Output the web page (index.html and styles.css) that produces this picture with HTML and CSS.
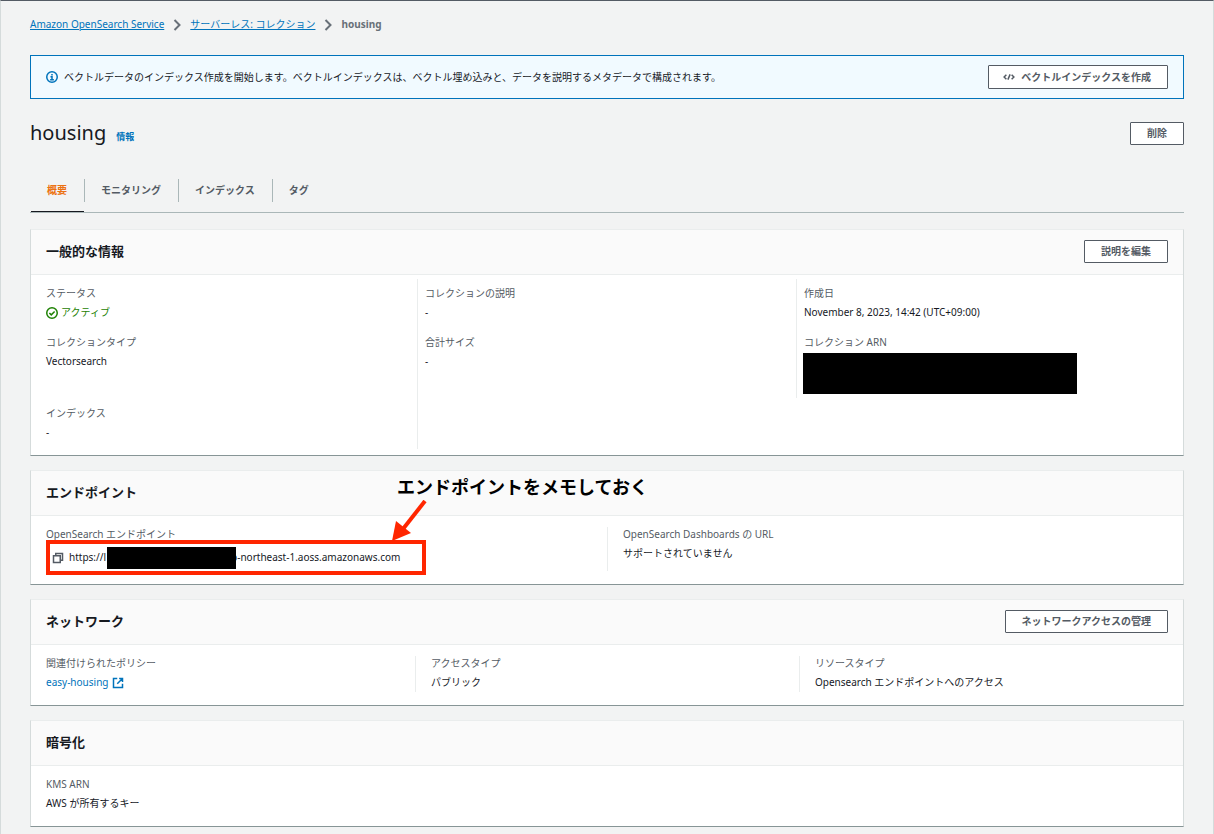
FILE: index.html
```html
<!DOCTYPE html>
<html lang="ja">
<head>
<meta charset="utf-8">
<title>housing</title>
<link rel="stylesheet" href="styles.css">
</head>
<body>
<main class="page">
  <nav class="breadcrumb" aria-label="breadcrumb">
    <a href="#">Amazon OpenSearch Service</a>
    <svg class="chevron" viewBox="0 0 8 12"><path d="M1.5 1 6.5 6 1.5 11"/></svg>
    <a href="#">サーバーレス: コレクション</a>
    <svg class="chevron" viewBox="0 0 8 12"><path d="M1.5 1 6.5 6 1.5 11"/></svg>
    <span class="current">housing</span>
  </nav>

  <section class="banner">
    <svg class="icon" viewBox="0 0 16 16"><circle cx="8" cy="8" r="7"/><path d="M8 4v2M6 7.5h2V11M5.500 11.500h5"/></svg>
    <p class="banner-text">ベクトルデータのインデックス作成を開始します。ベクトルインデックスは、ベクトル埋め込みと、データを説明するメタデータで構成されます。</p>
    <button class="button" type="button"><svg class="icon code" viewBox="0 0 16 16"><path d="M4.500 5 1.500 8l3 3M11.500 5l3 3-3 3M9.500 4.500 6.500 11.500"/></svg>ベクトルインデックスを作成</button>
  </section>

  <header class="title-row">
    <h1>housing</h1>
    <a class="info" href="#">情報</a>
    <button class="button push" type="button">削除</button>
  </header>

  <div class="tabs" role="tablist">
    <button class="tab active" role="tab" aria-selected="true" type="button">概要</button>
    <button class="tab" role="tab" type="button">モニタリング</button>
    <button class="tab" role="tab" type="button">インデックス</button>
    <button class="tab" role="tab" type="button">タグ</button>
  </div>

  <div class="panels">
    <section class="panel">
      <div class="panel-head"><h2>一般的な情報</h2><button class="button" type="button">説明を編集</button></div>
      <div class="general">
        <dl class="stack">
          <div><dt>ステータス</dt><dd class="ok"><svg class="icon" viewBox="0 0 16 16"><circle cx="8" cy="8" r="7"/><path d="m4.500 8 2.500 2.500 4.500-4.500"/></svg>アクティブ</dd></div>
          <div class="tall"><dt>コレクションタイプ</dt><dd>Vectorsearch</dd></div>
          <div><dt>インデックス</dt><dd>-</dd></div>
        </dl>
        <dl class="stack">
          <div><dt>コレクションの説明</dt><dd>-</dd></div>
          <div><dt>合計サイズ</dt><dd>-</dd></div>
        </dl>
        <dl class="stack short">
          <div><dt>作成日</dt><dd>November 8, 2023, 14:42 (UTC+09:00)</dd></div>
          <div><dt>コレクション ARN</dt><dd class="arn"></dd></div>
        </dl>
      </div>
    </section>

    <section class="panel">
      <div class="panel-head"><h2>エンドポイント</h2></div>
      <div class="fields two">
        <dl class="field">
          <dt>OpenSearch エンドポイント</dt>
          <dd class="url"><button class="copy" type="button" aria-label="コピー"><svg class="icon" viewBox="0 0 16 16"><path d="M2 5h9v9H2zM5 5V2h9v9h-3"/></svg></button><span>https://l</span><span class="mask"></span><span>p-northeast-1.aoss.amazonaws.com</span><span class="frame"></span></dd>
        </dl>
        <dl class="field">
          <dt>OpenSearch Dashboards の URL</dt>
          <dd>サポートされていません</dd>
        </dl>
      </div>
      <div class="note">
        <p>エンドポイントをメモしておく</p>
        <svg viewBox="0 0 36 42"><path class="shaft" d="M33 1 11 29"/><path class="head" d="M0 41 4 21 19 33z"/></svg>
      </div>
    </section>

    <section class="panel">
      <div class="panel-head"><h2>ネットワーク</h2><button class="button" type="button">ネットワークアクセスの管理</button></div>
      <div class="fields three">
        <dl class="field"><dt>関連付けられたポリシー</dt><dd><a class="external" href="#">easy-housing<svg class="icon" viewBox="0 0 16 16"><path d="M7 2H2v12h12V9M9.500 2H14v4.500M14 2 7 9"/></svg></a></dd></dl>
        <dl class="field"><dt>アクセスタイプ</dt><dd>パブリック</dd></dl>
        <dl class="field"><dt>リソースタイプ</dt><dd>Opensearch エンドポイントへのアクセス</dd></dl>
      </div>
    </section>

    <section class="panel">
      <div class="panel-head"><h2>暗号化</h2></div>
      <div class="fields">
        <dl class="field"><dt>KMS ARN</dt><dd>AWS が所有するキー</dd></dl>
      </div>
    </section>
  </div>
</main>
</body>
</html>
```
FILE: styles.css
```css
* { box-sizing: border-box; }

body {
  margin: 0;
  background: #f2f3f3;
  color: #16191f;
  font: 10px/19px "Noto Sans", "Noto Sans CJK JP", sans-serif;
}

h1, h2, p, dl, dd { margin: 0; }
button { font: inherit; }
a { color: #0073bb; }

.page {
  min-height: 100vh;
  padding: 14px 29px 7px;
  border: 1px solid #d5dbdb;
  border-top-color: #545b64;
  border-bottom: 0;
}

.icon {
  width: 12px;
  height: 12px;
  flex: none;
  fill: none;
  stroke: currentColor;
  stroke-width: 2;
}

.breadcrumb { display: flex; align-items: center; height: 19px; gap: 8px; }
.current { color: #687078; font-weight: 700; }
.chevron { width: 8px; height: 12px; margin: 0 1px; fill: none; stroke: #687078; stroke-width: 2; }

.banner {
  display: flex;
  align-items: center;
  gap: 6px;
  height: 44px;
  margin-top: 21px;
  padding: 0 15px;
  border: 1px solid #0073bb;
  background: #f1faff;
}
.banner > .icon { color: #0073bb; }
.banner-text { flex: 1; }
.banner .button { height: 24px; }

.button {
  display: flex;
  align-items: center;
  gap: 6px;
  height: 23px;
  padding: 0 16px;
  border: 1px solid #545b64;
  border-radius: 1px;
  background: #fff;
  color: #545b64;
  font-weight: 700;
  white-space: nowrap;
}
.code { margin-left: -2px; }

.title-row { display: flex; align-items: center; gap: 10px; height: 24px; margin-top: 22px; }
h1 { font-size: 20px; line-height: 24px; font-weight: 400; }
.info { padding-top: 6px; font-size: 9px; font-weight: 700; text-decoration: none; }
.push { margin-left: auto; }

.tabs { display: flex; margin-top: 33px; border-bottom: 1px solid #aab7b8; }
.tab {
  position: relative;
  height: 34px;
  padding: 0 17px 9px;
  border: 0;
  background: none;
  color: #545b64;
  font-weight: 700;
}
.tab + .tab::before {
  content: "";
  position: absolute;
  left: 0;
  top: 1px;
  height: 23px;
  border-left: 1px solid #aab7b8;
}
.tab.active { color: #ec7211; }
.tab.active::after {
  content: "";
  position: absolute;
  left: 1px;
  right: 0;
  bottom: 0;
  border-bottom: 1px solid #16191f;
}

.panels { display: grid; gap: 14px; margin-top: 16px; }
.panel {
  position: relative;
  border: 1px solid #d5dbdb;
  border-top-color: #eaeded;
  border-bottom-color: #879596;
  background: #fff;
}
.panel-head {
  display: flex;
  align-items: center;
  justify-content: space-between;
  height: 45px;
  padding: 0 15px 2px;
  border-bottom: 1px solid #eaeded;
  background: #fafafa;
}
h2 { font-size: 13px; line-height: 20px; font-weight: 700; }

dt { margin-bottom: 2px; line-height: 15px; color: #545b64; }

.general { display: grid; grid-template-columns: repeat(3, 1fr); padding: 4px 8px 6px 7px; }
.stack { display: grid; align-content: start; gap: 13px; padding: 7px 8px; }
.stack + .stack { border-left: 1px solid #eaeded; padding-left: 7px; }
.tall { min-height: 58px; }
.short { align-self: start; padding-bottom: 4px; }
.ok { display: flex; align-items: center; gap: 3px; color: #1d8102; }
.arn { max-width: 274px; height: 41px; margin: 3px 0 0 -1px; background: #000; }

.fields { display: grid; padding: 11px 0 13px; }
.two { grid-template-columns: repeat(2, 1fr); }
.three { grid-template-columns: repeat(3, 1fr); }
.field { padding: 0 15px; }
.field + .field { border-left: 1px solid #eaeded; }

.external { display: inline-flex; align-items: center; gap: 4px; text-decoration: none; }

.url { position: relative; display: flex; align-items: center; height: 27px; padding-left: 6px; }
.copy { display: flex; margin-right: 5px; padding: 0; border: 0; background: none; color: #545b64; }
.mask { position: relative; width: 129px; height: 22px; margin: 0 -5px 0 -1px; background: #000; }
.frame { position: absolute; left: 0; top: -4px; width: 380px; height: 35px; border: 4px solid #ff2600; }
.url .mask { margin-left: 1px; }

.note { position: absolute; left: 361px; top: 3px; color: #000; }
.note p { padding-left: 5px; font-size: 18px; line-height: 26px; font-weight: 700; }
.note svg { display: block; width: 36px; height: 42px; }
.shaft { fill: none; stroke: #ff2600; stroke-width: 4; }
.head { fill: #ff2600; }
```
